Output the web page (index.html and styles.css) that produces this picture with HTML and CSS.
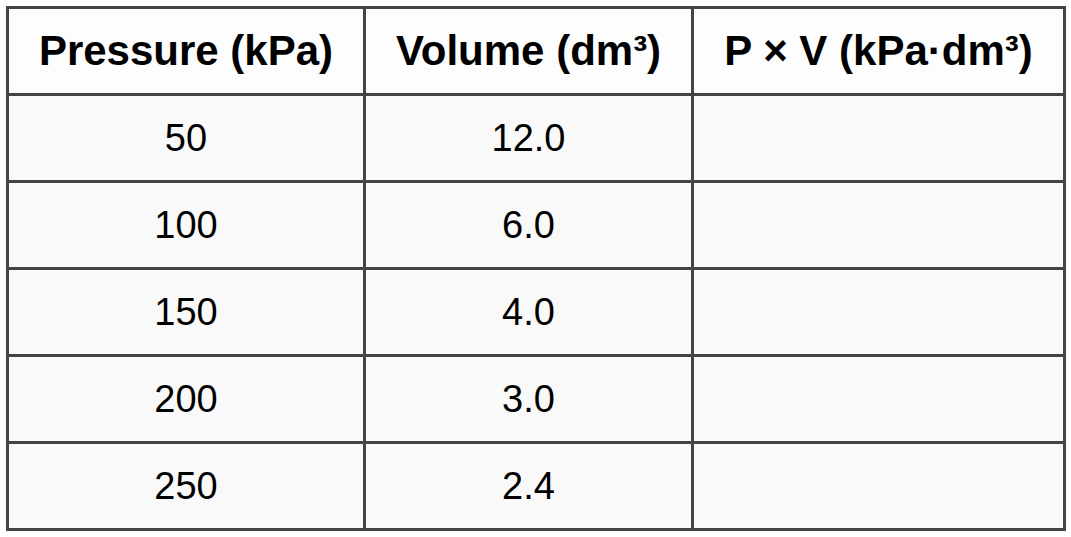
FILE: index.html
```html
<!DOCTYPE html>
<html lang="en">
<head>
  <meta charset="UTF-8" />
  <title>Boyle's Law Data</title>
  <link rel="stylesheet" href="styles.css">
</head>
<body>
  <table class="data-table">
    <colgroup>
      <col class="col-pressure">
      <col class="col-volume">
      <col class="col-product">
    </colgroup>
    <thead>
      <tr>
        <th>Pressure (kPa)</th>
        <th>Volume (dm³)</th>
        <th>P × V (kPa·dm³)</th>
      </tr>
    </thead>
    <tbody>
      <tr><td>50</td><td>12.0</td><td></td></tr>
      <tr><td>100</td><td>6.0</td><td></td></tr>
      <tr><td>150</td><td>4.0</td><td></td></tr>
      <tr><td>200</td><td>3.0</td><td></td></tr>
      <tr><td>250</td><td>2.4</td><td></td></tr>
    </tbody>
  </table>
</body>
</html>
```

FILE: styles.css
```css
body {
  margin: 0;
  padding: 6px;
  background: #ffffff;
  font-family: 'Liberation Sans', Arial, sans-serif;
  color: #000;
}

.data-table {
  border-collapse: collapse;
  table-layout: fixed;
  width: 1060px;
  border: 3px solid #444;
}

.col-pressure {
  width: 357px;
}

.col-volume {
  width: 328px;
}

.col-product {
  width: 372px;
}

.data-table tr {
  height: 87px;
}

.data-table th,
.data-table td {
  border: 3px solid #444;
  padding: 0;
  text-align: center;
  vertical-align: middle;
}

.data-table th {
  background: #fdfdfd;
  font-size: 42px;
  font-weight: bold;
}

.data-table td {
  background: #f9f9f9;
  font-size: 38px;
}
```
